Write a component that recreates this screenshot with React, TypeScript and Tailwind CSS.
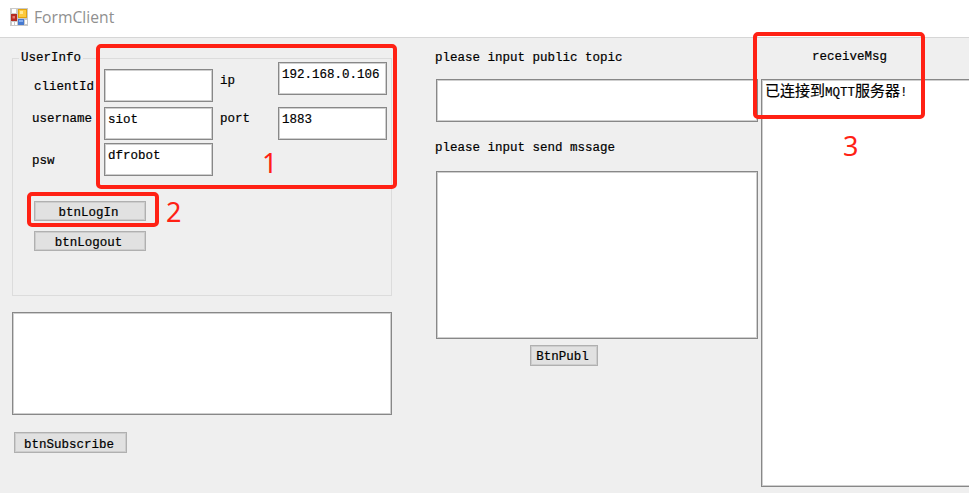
import type { ReactNode } from "react";

const mono =
  "font-['Liberation_Mono','Noto_Sans_CJK_SC',monospace] text-[12.5px] leading-4 text-black whitespace-pre [-webkit-text-stroke:0.2px_black]";

function Label({ children, className = "" }: { children: ReactNode; className?: string }) {
  return <div className={`${mono} h-4 ${className}`}>{children}</div>;
}

function Field({ value = "", className = "" }: { value?: string; className?: string }) {
  return (
    <div className={`${mono} box-border shrink-0 border-2 border-[#cfcfcf] bg-white pl-0.5 outline-1 -outline-offset-1 outline-[#888888] ${className}`}>
      {value}
    </div>
  );
}

function Button({ children, className = "" }: { children: ReactNode; className?: string }) {
  return (
    <button className={`${mono} flex shrink-0 justify-center overflow-hidden border-2 border-[#cdcdcd] bg-[#e1e1e1] pr-[3px] outline-1 -outline-offset-1 outline-[#b0b0b0] ${className}`}>
      {children}
    </button>
  );
}

function Highlight({ className }: { className: string }) {
  return <div className={`pointer-events-none absolute rounded-[5px] border-4 border-[#ff2114] ${className}`} />;
}

function Mark({ children, className }: { children: ReactNode; className: string }) {
  return (
    <div className={`absolute font-['Noto_Sans',sans-serif] text-[27px] leading-8 text-[#ff2114] ${className}`}>
      {children}
    </div>
  );
}

function FormIcon() {
  return (
    <svg className="mt-2 h-[18px] w-[18px]" viewBox="0 0 18 18">
      <rect x="0" y="0" width="18" height="18" fill="#c9c9c9" />
      <rect x="2" y="1" width="4" height="4" fill="#fff" />
      <rect x="1" y="6" width="6" height="7" fill="#b52b22" />
      <rect x="2.5" y="8" width="2.5" height="2.5" fill="#e9776b" />
      <rect x="8" y="1" width="9" height="9" fill="#e0a310" />
      <rect x="9" y="2" width="7" height="7" fill="#fdc93c" />
      <rect x="10" y="3" width="3" height="3" fill="#ffe894" />
      <rect x="8" y="11" width="6" height="6" fill="#4779cf" />
      <rect x="9" y="12" width="4" height="2" fill="#83adf0" />
      <rect x="2" y="14" width="2" height="3" fill="#fff" />
      <rect x="5" y="14" width="2" height="3" fill="#fff" />
      <rect x="15" y="12" width="2" height="4" fill="#fff" />
    </svg>
  );
}

export default function App() {
  return (
    <div className="relative flex h-[493px] w-[969px] flex-col overflow-hidden bg-[#efefef]">
      <header className="flex h-[38px] shrink-0 gap-1.5 border-b border-[#d6d6d6] bg-white pl-2.5">
        <FormIcon />
        <span className="mt-[7px] font-['Open_Sans',sans-serif] text-[15.7px] leading-5 text-[#909090]">FormClient</span>
      </header>

      <main className="flex min-h-0 flex-1">
        <section className="flex w-[436px] shrink-0 flex-col pl-3 pt-[11px]">
          <div className="flex h-[247px] w-[380px] flex-col">
            <div className="flex h-4 shrink-0">
              <div className="mt-[9px] w-[7px] border-l border-t border-[#dcdcdc]" />
              <Label className="px-0.5 pt-px">UserInfo</Label>
              <div className="mt-[9px] flex-1 border-r border-t border-[#dcdcdc]" />
            </div>
            <div className="flex flex-1 flex-col border-x border-b border-[#dcdcdc]">
              <div className="flex h-[128px]">
                <div className="w-[91px] pl-[19px]">
                  <Label className="ml-[2px] mt-[14px]">clientId</Label>
                  <Label className="mt-4">username</Label>
                  <Label className="mt-[26px]">psw</Label>
                </div>
                <div className="w-[116px] pt-1">
                  <Field className="h-[33px] w-[109px]" />
                  <Field value="siot" className="mt-[5px] h-[33px] w-[109px] pt-[3px]" />
                  <Field value="dfrobot" className="mt-[3px] h-[33px] w-[109px] pt-[3px]" />
                </div>
                <div className="w-[58px]">
                  <Label className="mt-2">ip</Label>
                  <Label className="mt-[22px]">port</Label>
                </div>
                <div className="-mt-[3px]">
                  <Field value="192.168.0.106" className="h-[33px] w-[109px] pt-[3px]" />
                  <Field value="1883" className="mt-3 h-[33px] w-[109px] pt-[3px]" />
                </div>
              </div>
              <Button className="ml-[21px] mt-2 h-5 w-[112px] pt-0.5">btnLogIn</Button>
              <Button className="ml-[21px] mt-2.5 h-5 w-[112px] pt-0.5">btnLogout</Button>
            </div>
          </div>
          <Field className="mt-4 h-[103px] w-[380px]" />
          <Button className="ml-0.5 mt-[17px] h-[21px] w-[113px] pt-[3px]">btnSubscribe</Button>
        </section>

        <section className="flex w-[325px] shrink-0 flex-col pt-3">
          <Label className="-ml-px">please input public topic</Label>
          <Field className="mt-[13px] h-[43px] w-[322px]" />
          <Label className="-ml-px mt-[18px]">please input send mssage</Label>
          <Field className="mt-[15px] h-[168px] w-[322px]" />
          <Button className="ml-[94px] mt-1.5 h-[21px] w-[68px] pt-0.5">BtnPubl</Button>
        </section>

        <section className="flex flex-1 flex-col pt-[11px]">
          <Label className="ml-[51px]">receiveMsg</Label>
          <div className={`${mono} mt-3.5 h-[408px] w-[220px] border-2 border-[#cfcfcf] bg-white pl-0.5 pt-1 outline-1 -outline-offset-1 outline-[#888888]`}>
            <span className="text-[15px]">已连接到</span>MQTT<span className="text-[15px]">服务器</span>!
          </div>
        </section>
      </main>

      <Highlight className="left-24 top-[44px] h-[145px] w-[301px]" />
      <Highlight className="left-[27px] top-[192px] h-[35px] w-[132px]" />
      <Highlight className="left-[753px] top-8 h-[87px] w-[172px]" />
      <Mark className="left-[262px] top-[147px]">1</Mark>
      <Mark className="left-[166px] top-[196px]">2</Mark>
      <Mark className="left-[843px] top-[130px]">3</Mark>
    </div>
  );
}
